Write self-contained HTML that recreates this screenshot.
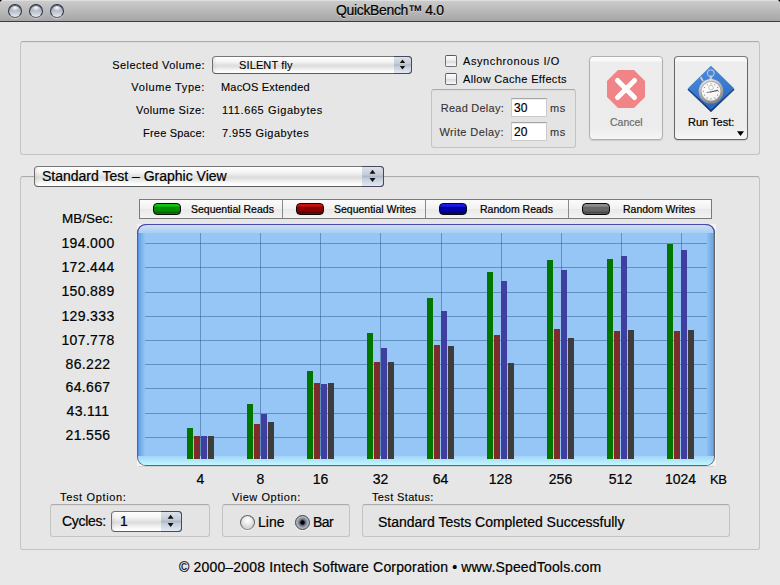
<!DOCTYPE html>
<html><head><meta charset="utf-8">
<style>
*{margin:0;padding:0;box-sizing:border-box}
html,body{width:780px;height:585px;overflow:hidden;background:#000}
#win{position:absolute;left:0;top:0;width:780px;height:585px;background:#e8e8e8;border-radius:4px 4px 0 0;overflow:hidden}
.t{position:absolute;white-space:nowrap;font-family:"Liberation Sans",sans-serif;line-height:1;color:#000;-webkit-text-stroke:0.2px currentColor}
.s11{font-size:11px;-webkit-text-stroke:0.1px currentColor}
.s12{font-size:12px}
.s14{font-size:14px}
.r{text-align:right}
.abs{position:absolute}
#titlebar{position:absolute;left:0;top:0;width:780px;height:22px;background:linear-gradient(#dedede 0,#dedede 1px,#cbcbcb 1px,#a6a6a6 21px,#3c3c3c 21px)}
.light{position:absolute;top:4px;width:14px;height:14px;border-radius:50%;border:1px solid #2c3046;border-bottom-color:#5c6274;box-shadow:0 1px 1px rgba(255,255,255,0.45),inset 0 1px 0 rgba(30,34,56,0.6);background:radial-gradient(ellipse 40% 30% at 50% 22%,#ffffff 0,rgba(255,255,255,0) 100%),linear-gradient(#a3a8b2 0,#b0b5be 40%,#cdd3dc 75%,#e6ecf4 100%)}
.group{position:absolute;border:1px solid #c3c3c3;border-top-color:#ababab;border-radius:3px;background:rgba(0,0,0,0.006);box-shadow:inset 0 1px 1px rgba(0,0,0,0.03)}
.popup{position:absolute;border:1px solid #6e6e6e;border-top-color:#777;border-bottom-color:#5c5c5c;border-radius:4px;background:linear-gradient(90deg,rgba(0,0,0,0.06) 0,rgba(0,0,0,0) 4px),linear-gradient(#fefefe 0,#f5f5f5 28%,#e8e8e8 42%,#dcdcdc 55%,#eaeaea 70%,#fbfbfb 88%,#ffffff 100%)}
.popup .arr{position:absolute;top:-1px;bottom:-1px;right:-1px;border:1px solid #454a60;border-left:0;border-radius:0 4px 4px 0;background:linear-gradient(#dde2ea,#c5ccd7 40%,#aeb8c6 50%,#c3ccd9 60%,#e2eaf4 100%)}
.chk{position:absolute;width:12px;height:12px;border:1px solid #707070;border-top-color:#5a5a5a;border-radius:2px;background:linear-gradient(#fdfdfd,#ededed 45%,#dcdcdc 55%,#fafafa)}
.field{position:absolute;background:#fff;border:1px solid #cbcbcb;border-top-color:#a4a4a4;box-shadow:inset 0 1px 0 #eeeeee}
.btn{position:absolute;border-radius:4px;background:linear-gradient(#fbfbfb 0,#f8f8f8 4px,#ededed 5px,#ececec 85%,#f6f6f6 100%);box-shadow:0 1px 1px rgba(0,0,0,0.12)}
.radio{position:absolute;width:15px;height:15px;border-radius:50%;border:1px solid #666;border-bottom-color:#8a8a8a;box-shadow:0 1px 0 rgba(255,255,255,0.6);background:radial-gradient(circle at 50% 35%,#ffffff 0,#f0f0f0 30%,#d6d6d6 65%,#fafafa 100%)}
</style></head><body>
<div id="win">
  <div id="titlebar"></div>
  <div class="light" style="left:8px"></div>
  <div class="light" style="left:29px"></div>
  <div class="light" style="left:50px"></div>
  <div class="t s14" style="left:336px;top:3px;letter-spacing:-0.35px;text-shadow:0 1px 0 rgba(255,255,255,0.45)">QuickBench™ 4.0</div>

  <!-- top group -->
  <div class="group" style="left:20px;top:41px;width:740px;height:114px"></div>
  <div class="t s11 r" style="right:575px;top:60px;letter-spacing:0.45px">Selected Volume:</div>
  <div class="t s11 r" style="right:575px;top:82px;letter-spacing:0.6px">Volume Type:</div>
  <div class="t s11 r" style="right:575px;top:105px;letter-spacing:0.39px">Volume Size:</div>
  <div class="t s11 r" style="right:575px;top:128px;letter-spacing:0.18px">Free Space:</div>

  <div class="popup" style="left:212px;top:56px;width:200px;height:18px"><div class="arr" style="width:18px"><svg class="abs" style="left:0;top:0" width="18" height="16"><path d="M5.8 6 L8.5 2.6 L11.2 6 Z M5.8 9 L8.5 12.6 L11.2 9 Z" fill="#111"/></svg></div></div>
  <div class="t s11" style="left:239px;top:60px;letter-spacing:0.13px">SILENT fly</div>
  <div class="t s11" style="left:221px;top:82px;letter-spacing:0.18px">MacOS Extended</div>
  <div class="t s11" style="left:222px;top:105px;letter-spacing:0.6px">111.665 Gigabytes</div>
  <div class="t s11" style="left:222px;top:128px;letter-spacing:0.47px">7.955 Gigabytes</div>

  <div class="chk" style="left:445px;top:55px"></div>
  <div class="chk" style="left:445px;top:73px"></div>
  <div class="t s11" style="left:463px;top:56px;letter-spacing:0.59px">Asynchronous I/O</div>
  <div class="t s11" style="left:463px;top:74px;letter-spacing:0.33px">Allow Cache Effects</div>

  <div class="group" style="left:431px;top:89px;width:145px;height:59px"></div>
  <div class="t s11 r" style="right:276px;top:103px;letter-spacing:0.25px;color:#333">Read Delay:</div>
  <div class="t s11 r" style="right:276px;top:127px;letter-spacing:0.41px;color:#333">Write Delay:</div>
  <div class="field" style="left:511px;top:98px;width:36px;height:19px"></div>
  <div class="field" style="left:511px;top:122px;width:36px;height:19px"></div>
  <div class="t s12" style="left:514px;top:102px">30</div>
  <div class="t s12" style="left:514px;top:126px">20</div>
  <div class="t s11" style="left:550px;top:103px;letter-spacing:0.6px;color:#333">ms</div>
  <div class="t s11" style="left:550px;top:127px;letter-spacing:0.6px;color:#333">ms</div>

  <div class="btn" style="left:589px;top:56px;width:74px;height:84px;border:1px solid #b0b0b0"></div>
  <svg class="abs" style="left:607px;top:70px" width="38" height="38" viewBox="0 0 38 38">
    <polygon points="11,0 27,0 38,11 38,27 27,38 11,38 0,27 0,11" fill="#f08486"/>
    <path d="M10.5 10.5 L27.5 27.5 M27.5 10.5 L10.5 27.5" stroke="#fff" stroke-width="5" stroke-linecap="round"/>
  </svg>
  <div class="t" style="left:610px;top:117px;font-size:10.5px;color:#6c6c6c">Cancel</div>

  <div class="btn" style="left:674px;top:56px;width:74px;height:84px;border:1px solid #666;border-top-color:#7a7a7a"></div>
  <svg class="abs" style="left:685px;top:62px" width="52" height="52" viewBox="0 0 52 52">
    <defs>
      <linearGradient id="dg" x1="0" y1="0" x2="0.3" y2="1"><stop offset="0" stop-color="#4f90e2"/><stop offset="0.6" stop-color="#3a7bd0"/><stop offset="1" stop-color="#2c68bd"/></linearGradient>
      <linearGradient id="rg" x1="0" y1="0" x2="0.4" y2="1"><stop offset="0" stop-color="#f4f4f4"/><stop offset="0.5" stop-color="#b4b4b4"/><stop offset="1" stop-color="#8a8a8a"/></linearGradient>
      <radialGradient id="fg" cx="0.45" cy="0.4" r="0.7"><stop offset="0" stop-color="#ffffff"/><stop offset="0.8" stop-color="#f2f2f2"/><stop offset="1" stop-color="#d4d4d4"/></radialGradient>
    </defs>
    <path d="M26 5 L49.2 27.6 L26 49.8 L2.8 27.6 Z" fill="#173f80" stroke="#173f80" stroke-width="0.8" stroke-linejoin="round"/>
    <path d="M26 4 L48.6 26.2 L26 47 L3.4 26.2 Z" fill="url(#dg)" stroke="#4a8ad8" stroke-width="0.6" stroke-linejoin="round"/>
    <circle cx="25.8" cy="11.2" r="3.4" fill="none" stroke="#d4d4d4" stroke-width="1"/>
    <rect x="24.6" y="13.5" width="2.6" height="4.5" fill="#c8c8c8"/>
    <path d="M17.6 18.4 L16 15.8" stroke="#d0d0d0" stroke-width="1.8" stroke-linecap="round"/>
    <circle cx="26" cy="29.3" r="12.3" fill="url(#rg)"/>
    <circle cx="26" cy="29.3" r="10.2" fill="#9a9a9a"/>
    <circle cx="26" cy="29.3" r="9.5" fill="url(#fg)"/>
    <circle cx="26.00" cy="21.70" r="0.55" fill="#777"/><circle cx="29.80" cy="22.72" r="0.55" fill="#777"/><circle cx="32.58" cy="25.50" r="0.55" fill="#777"/><circle cx="33.60" cy="29.30" r="0.55" fill="#777"/><circle cx="32.58" cy="33.10" r="0.55" fill="#777"/><circle cx="29.80" cy="35.88" r="0.55" fill="#777"/><circle cx="26.00" cy="36.90" r="0.55" fill="#777"/><circle cx="22.20" cy="35.88" r="0.55" fill="#777"/><circle cx="19.42" cy="33.10" r="0.55" fill="#777"/><circle cx="18.40" cy="29.30" r="0.55" fill="#777"/><circle cx="19.42" cy="25.50" r="0.55" fill="#777"/><circle cx="22.20" cy="22.72" r="0.55" fill="#777"/>
    <circle cx="26" cy="25.6" r="2.3" fill="none" stroke="#aaa" stroke-width="0.7"/>
    <path d="M25.5 30 L32.5 28.4" stroke="#555" stroke-width="1.1" stroke-linecap="round"/>
    <path d="M25.5 30 L22 30.4" stroke="#666" stroke-width="0.9" stroke-linecap="round"/>
  </svg>
  <div class="t" style="left:688px;top:117px;font-size:11px;letter-spacing:0px">Run Test:</div>
  <svg class="abs" style="left:736px;top:130px" width="10" height="8"><path d="M1 1.3 L8 1.3 L4.5 6 Z" fill="#000"/></svg>

  <!-- graph group -->
  <div class="group" style="left:20px;top:176px;width:740px;height:374px"></div>
  <div class="popup" style="left:34px;top:166px;width:350px;height:21px"><div class="arr" style="width:22px;"><svg class="abs" style="left:0;top:0" width="21" height="19"><path d="M7.5 6.8 L10.5 2.8 L13.5 6.8 Z M7.5 11 L10.5 15 L13.5 11 Z" fill="#111"/></svg></div></div>
  <div class="t s14" style="left:42px;top:169px">Standard Test – Graphic View</div>

  <!-- legend+chart -->
<div class="abs" style="left:139px;top:199px;width:573px;height:20px;border:1px solid #7a7a7a;background:linear-gradient(#fbfbfb,#f1f1f1 50%,#e9e9e9 51%,#f3f3f3)"></div>
<div class="abs" style="left:282px;top:200px;width:1px;height:18px;background:#8a8a8a"></div>
<div class="abs" style="left:425px;top:200px;width:1px;height:18px;background:#8a8a8a"></div>
<div class="abs" style="left:568px;top:200px;width:1px;height:18px;background:#8a8a8a"></div>
<div class="abs" style="left:153px;top:203px;width:28px;height:12px;border:1.5px solid #0a0a0a;border-radius:4px;background:linear-gradient(#12c412 0,#12c412 20%,#008c00 35%,#008c00 70%,#006200 85%,#008c00 100%)"></div>
<div class="abs" style="left:296px;top:203px;width:28px;height:12px;border:1.5px solid #0a0a0a;border-radius:4px;background:linear-gradient(#c81010 0,#c81010 20%,#8a0000 35%,#8a0000 70%,#5a0000 85%,#8a0000 100%)"></div>
<div class="abs" style="left:439px;top:203px;width:28px;height:12px;border:1.5px solid #0a0a0a;border-radius:4px;background:linear-gradient(#1a1ae6 0,#1a1ae6 20%,#0000a8 35%,#0000a8 70%,#00006e 85%,#0000a8 100%)"></div>
<div class="abs" style="left:582px;top:203px;width:28px;height:12px;border:1.5px solid #0a0a0a;border-radius:4px;background:linear-gradient(#8c8c8c 0,#8c8c8c 20%,#666666 35%,#666666 70%,#484848 85%,#666666 100%)"></div>
<div class="t" style="left:191px;top:204px;font-size:10.5px">Sequential Reads</div>
<div class="t" style="left:334px;top:204px;font-size:10.5px">Sequential Writes</div>
<div class="t" style="left:480px;top:204px;font-size:10.5px">Random Reads</div>
<div class="t" style="left:623px;top:204px;font-size:10.5px">Random Writes</div>
<div class="t" style="left:62px;top:212px;font-size:13.5px">MB/Sec:</div>
<div class="t s14" style="left:38px;width:100px;text-align:center;top:236px;letter-spacing:0.35px">194.000</div>
<div class="t s14" style="left:38px;width:100px;text-align:center;top:260px;letter-spacing:0.35px">172.444</div>
<div class="t s14" style="left:38px;width:100px;text-align:center;top:284px;letter-spacing:0.35px">150.889</div>
<div class="t s14" style="left:38px;width:100px;text-align:center;top:309px;letter-spacing:0.35px">129.333</div>
<div class="t s14" style="left:38px;width:100px;text-align:center;top:333px;letter-spacing:0.35px">107.778</div>
<div class="t s14" style="left:38px;width:100px;text-align:center;top:357px;letter-spacing:0.35px">86.222</div>
<div class="t s14" style="left:38px;width:100px;text-align:center;top:380px;letter-spacing:0.35px">64.667</div>
<div class="t s14" style="left:38px;width:100px;text-align:center;top:404px;letter-spacing:0.35px">43.111</div>
<div class="t s14" style="left:38px;width:100px;text-align:center;top:428px;letter-spacing:0.35px">21.556</div>
<div class="t s14" style="left:150.5px;width:100px;text-align:center;top:472px">4</div>
<div class="t s14" style="left:210.5px;width:100px;text-align:center;top:472px">8</div>
<div class="t s14" style="left:270.5px;width:100px;text-align:center;top:472px">16</div>
<div class="t s14" style="left:330.5px;width:100px;text-align:center;top:472px">32</div>
<div class="t s14" style="left:390.5px;width:100px;text-align:center;top:472px">64</div>
<div class="t s14" style="left:450.5px;width:100px;text-align:center;top:472px">128</div>
<div class="t s14" style="left:510.5px;width:100px;text-align:center;top:472px">256</div>
<div class="t s14" style="left:570.5px;width:100px;text-align:center;top:472px">512</div>
<div class="t s14" style="left:630.5px;width:100px;text-align:center;top:472px">1024</div>
<div class="t" style="left:710px;top:473px;font-size:13px;letter-spacing:-0.5px">KB</div>

<div class="abs" style="left:137px;top:224px;width:579px;height:242px;background:#f3f3f3"></div><div class="abs" style="left:139px;top:466px;width:575px;height:1px;background:#d2d2d2"></div>
<svg class="abs" style="left:137px;top:224px" width="578" height="242" viewBox="0 0 578 242" shape-rendering="crispEdges">
<defs><linearGradient id="gt" x1="0" y1="0" x2="0" y2="1"><stop offset="0" stop-color="#d2e2f6"/><stop offset="1" stop-color="#a9cdf3"/></linearGradient><linearGradient id="gb" x1="0" y1="0" x2="0" y2="1"><stop offset="0" stop-color="#a4d4fa"/><stop offset="1" stop-color="#c4fcff"/></linearGradient><clipPath id="cp"><rect x="1" y="1" width="576" height="240" rx="8" ry="8"/></clipPath></defs>
<rect x="0" y="0" width="578" height="242" rx="9" ry="9" fill="#64646a" shape-rendering="geometricPrecision"/>
<g clip-path="url(#cp)" shape-rendering="geometricPrecision">
<rect x="0" y="0" width="578" height="242" fill="#5592e2"/><rect x="2" y="0" width="574" height="242" fill="#6ea8e2"/><rect x="4" y="0" width="570" height="242" fill="#80b6ec"/><rect x="6" y="0" width="566" height="242" fill="#88bdf2"/><rect x="7" y="0" width="565" height="242" fill="#8ec2f4"/><rect x="570" y="0" width="1" height="242" fill="#88c0f2"/><rect x="571" y="0" width="1" height="242" fill="#86baf0"/><rect x="572" y="0" width="2" height="242" fill="#7eb4ea"/><rect x="574" y="0" width="2" height="242" fill="#72aae2"/>
<rect x="8" y="9" width="562" height="223" fill="#95c6f6"/>
<rect x="0" y="0" width="578" height="9" fill="url(#gt)"/>
<rect x="0" y="232" width="578" height="10" fill="url(#gb)"/>
</g>
<path d="M0.5 10 Q0.5 0.5 10 0.5 L568 0.5 Q577.5 0.5 577.5 10" fill="none" stroke="#4a48aa" stroke-width="1.1" shape-rendering="geometricPrecision"/>
<rect x="8" y="19" width="562" height="1" fill="#143c6e" fill-opacity="0.4"/>
<rect x="8" y="43" width="562" height="1" fill="#143c6e" fill-opacity="0.4"/>
<rect x="8" y="68" width="562" height="1" fill="#143c6e" fill-opacity="0.4"/>
<rect x="8" y="92" width="562" height="1" fill="#143c6e" fill-opacity="0.4"/>
<rect x="8" y="116" width="562" height="1" fill="#143c6e" fill-opacity="0.4"/>
<rect x="8" y="140" width="562" height="1" fill="#143c6e" fill-opacity="0.4"/>
<rect x="8" y="164" width="562" height="1" fill="#143c6e" fill-opacity="0.4"/>
<rect x="8" y="189" width="562" height="1" fill="#143c6e" fill-opacity="0.4"/>
<rect x="8" y="213" width="562" height="1" fill="#143c6e" fill-opacity="0.4"/>
<rect x="63" y="9" width="1" height="223" fill="#143c6e" fill-opacity="0.4"/>
<rect x="123" y="9" width="1" height="223" fill="#143c6e" fill-opacity="0.4"/>
<rect x="183" y="9" width="1" height="223" fill="#143c6e" fill-opacity="0.4"/>
<rect x="243" y="9" width="1" height="223" fill="#143c6e" fill-opacity="0.4"/>
<rect x="304" y="9" width="1" height="223" fill="#143c6e" fill-opacity="0.4"/>
<rect x="364" y="9" width="1" height="223" fill="#143c6e" fill-opacity="0.4"/>
<rect x="424" y="9" width="1" height="223" fill="#143c6e" fill-opacity="0.4"/>
<rect x="484" y="9" width="1" height="223" fill="#143c6e" fill-opacity="0.4"/>
<rect x="544" y="9" width="1" height="223" fill="#143c6e" fill-opacity="0.4"/>
<rect x="50" y="204" width="6" height="31" fill="#007500"/>
<rect x="57" y="212" width="6" height="23" fill="#7d2b2b"/>
<rect x="64" y="212" width="6" height="23" fill="#3f3f9f"/>
<rect x="71" y="212" width="6" height="23" fill="#3d3d3d"/>
<rect x="110" y="180" width="6" height="55" fill="#007500"/>
<rect x="117" y="200" width="6" height="35" fill="#7d2b2b"/>
<rect x="124" y="190" width="6" height="45" fill="#3f3f9f"/>
<rect x="131" y="198" width="6" height="37" fill="#3d3d3d"/>
<rect x="170" y="147" width="6" height="88" fill="#007500"/>
<rect x="177" y="159" width="6" height="76" fill="#7d2b2b"/>
<rect x="184" y="160" width="6" height="75" fill="#3f3f9f"/>
<rect x="191" y="159" width="6" height="76" fill="#3d3d3d"/>
<rect x="230" y="109" width="6" height="126" fill="#007500"/>
<rect x="237" y="138" width="6" height="97" fill="#7d2b2b"/>
<rect x="244" y="124" width="6" height="111" fill="#3f3f9f"/>
<rect x="251" y="138" width="6" height="97" fill="#3d3d3d"/>
<rect x="290" y="74" width="6" height="161" fill="#007500"/>
<rect x="297" y="121" width="6" height="114" fill="#7d2b2b"/>
<rect x="304" y="87" width="6" height="148" fill="#3f3f9f"/>
<rect x="311" y="122" width="6" height="113" fill="#3d3d3d"/>
<rect x="350" y="48" width="6" height="187" fill="#007500"/>
<rect x="357" y="111" width="6" height="124" fill="#7d2b2b"/>
<rect x="364" y="57" width="6" height="178" fill="#3f3f9f"/>
<rect x="371" y="139" width="6" height="96" fill="#3d3d3d"/>
<rect x="410" y="36" width="6" height="199" fill="#007500"/>
<rect x="417" y="105" width="6" height="130" fill="#7d2b2b"/>
<rect x="424" y="46" width="6" height="189" fill="#3f3f9f"/>
<rect x="431" y="114" width="6" height="121" fill="#3d3d3d"/>
<rect x="470" y="35" width="6" height="200" fill="#007500"/>
<rect x="477" y="107" width="6" height="128" fill="#7d2b2b"/>
<rect x="484" y="32" width="6" height="203" fill="#3f3f9f"/>
<rect x="491" y="106" width="6" height="129" fill="#3d3d3d"/>
<rect x="530" y="20" width="6" height="215" fill="#007500"/>
<rect x="537" y="107" width="6" height="128" fill="#7d2b2b"/>
<rect x="544" y="26" width="6" height="209" fill="#3f3f9f"/>
<rect x="551" y="106" width="6" height="129" fill="#3d3d3d"/>
</svg>


  <!-- bottom -->
  <div class="t s11" style="left:60px;top:492px;letter-spacing:0.65px">Test Option:</div>
  <div class="group" style="left:50px;top:504px;width:160px;height:33px"></div>
  <div class="t s14" style="left:62px;top:514px;letter-spacing:-0.3px">Cycles:</div>
  <div class="popup" style="left:111px;top:511px;width:71px;height:21px"><div class="arr" style="width:21px"><svg class="abs" style="left:0;top:0" width="20" height="19"><path d="M6.6 6.8 L9.6 2.8 L12.6 6.8 Z M6.6 11 L9.6 15 L12.6 11 Z" fill="#111"/></svg></div></div>
  <div class="t s14" style="left:120px;top:514px">1</div>

  <div class="t s11" style="left:232px;top:492px;letter-spacing:0.55px">View Option:</div>
  <div class="group" style="left:222px;top:504px;width:128px;height:33px"></div>
  <div class="radio" style="left:240px;top:515px"></div>
  <div class="t s14" style="left:258px;top:515px">Line</div>
  <div class="radio" style="left:295px;top:515px;border-color:#3c3f4c;background:radial-gradient(circle at 50% 50%,#000 0,#000 1.8px,#4a4e5a 2.4px,#7c8492 40%,#a9b2c0 60%,#d6dde6 100%)"></div>
  <div class="t s14" style="left:313px;top:515px;letter-spacing:-0.5px">Bar</div>

  <div class="t s11" style="left:372px;top:492px;letter-spacing:0.36px">Test Status:</div>
  <div class="group" style="left:362px;top:504px;width:368px;height:33px"></div>
  <div class="t s14" style="left:378px;top:515px">Standard Tests Completed Successfully</div>

  <div class="t s14" style="left:179px;top:560px;letter-spacing:0.17px">© 2000–2008 Intech Software Corporation • www.SpeedTools.com</div>
</div>
</body></html>
